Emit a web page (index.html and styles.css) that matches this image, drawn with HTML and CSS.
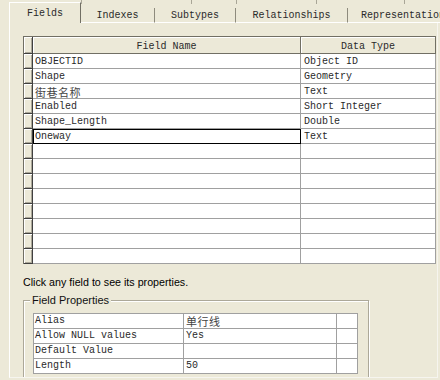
FILE: index.html
```html
<!DOCTYPE html>
<html lang="zh">

<head>
    <meta charset="UTF-8">
    <title>Field Properties</title>
    <link rel="stylesheet" href="styles.css">
</head>

<body>
    <div class="ticks">
        <span style="width: 82px"></span>
        <span style="width: 110px"></span>
        <span style="width: 45px"></span>
        <span style="width: 80px"></span>
        <span style="width: 88px"></span>
    </div>

    <div class="tabs">
        <div class="tab active">Fields</div>
        <div class="tab tab-indexes">Indexes</div>
        <div class="tab tab-subtypes">Subtypes</div>
        <div class="tab tab-relations">Relationships</div>
        <div class="tab tab-repr">Representations</div>
    </div>

    <div class="page">
        <div class="grid">
            <div class="grid-row head">
                <div class="rh"></div>
                <div class="cell name">Field Name</div>
                <div class="cell type">Data Type</div>
            </div>
            <div class="grid-row">
                <div class="rh"></div>
                <div class="cell name">OBJECTID</div>
                <div class="cell type">Object ID</div>
            </div>
            <div class="grid-row">
                <div class="rh"></div>
                <div class="cell name">Shape</div>
                <div class="cell type">Geometry</div>
            </div>
            <div class="grid-row">
                <div class="rh"></div>
                <div class="cell name"><span class="cjk">街巷名称</span></div>
                <div class="cell type">Text</div>
            </div>
            <div class="grid-row">
                <div class="rh"></div>
                <div class="cell name">Enabled</div>
                <div class="cell type">Short Integer</div>
            </div>
            <div class="grid-row">
                <div class="rh"></div>
                <div class="cell name">Shape_Length</div>
                <div class="cell type">Double</div>
            </div>
            <div class="grid-row">
                <div class="rh"></div>
                <div class="cell name focused">Oneway</div>
                <div class="cell type">Text</div>
            </div>
            <div class="grid-row"><div class="rh"></div><div class="cell name"></div><div class="cell type"></div></div>
            <div class="grid-row"><div class="rh"></div><div class="cell name"></div><div class="cell type"></div></div>
            <div class="grid-row"><div class="rh"></div><div class="cell name"></div><div class="cell type"></div></div>
            <div class="grid-row"><div class="rh"></div><div class="cell name"></div><div class="cell type"></div></div>
            <div class="grid-row"><div class="rh"></div><div class="cell name"></div><div class="cell type"></div></div>
            <div class="grid-row"><div class="rh"></div><div class="cell name"></div><div class="cell type"></div></div>
            <div class="grid-row"><div class="rh"></div><div class="cell name"></div><div class="cell type"></div></div>
            <div class="grid-row"><div class="rh"></div><div class="cell name"></div><div class="cell type"></div></div>
        </div>

        <p class="hint">Click any field to see its properties.</p>

        <fieldset class="group">
            <legend>Field Properties</legend>
            <div class="props">
                <div class="prop-row">
                    <div class="pcell key">Alias</div>
                    <div class="pcell val"><span class="cjk">单行线</span></div>
                    <div class="pcell extra"></div>
                </div>
                <div class="prop-row">
                    <div class="pcell key">Allow NULL values</div>
                    <div class="pcell val">Yes</div>
                    <div class="pcell extra"></div>
                </div>
                <div class="prop-row">
                    <div class="pcell key">Default Value</div>
                    <div class="pcell val"></div>
                    <div class="pcell extra"></div>
                </div>
                <div class="prop-row">
                    <div class="pcell key">Length</div>
                    <div class="pcell val">50</div>
                    <div class="pcell extra"></div>
                </div>
            </div>
        </fieldset>
    </div>
</body>

</html>
```

FILE: styles.css
```css
body {
    margin: 0;
    width: 440px;
    height: 380px;
    overflow: hidden;
    background-color: #ece9d8;
    font-family: "Liberation Mono", monospace;
    font-size: 10px;
    color: #2a2a2a;
}

/* second tab row, cut off at the top */
.ticks {
    display: flex;
    height: 4px;
}

.ticks span {
    flex: none;
    box-sizing: border-box;
    border-right: 1px solid #a9a697;
}

.tabs {
    display: flex;
    align-items: flex-end;
    height: 19px;
    padding-left: 9px;
    white-space: nowrap;
}

.tab {
    flex: none;
    box-sizing: border-box;
    height: 15px;
    padding-top: 1px;
    line-height: 14px;
    text-align: center;
    border-right: 1px solid #8e8b7d;
    border-bottom: 1px solid #fff;
    overflow: hidden;
}

.tab.active {
    width: 72px;
    height: 21px;
    padding-top: 0;
    line-height: 21px;
    border-left: 1px solid #fff;
    border-top: 1px solid #fff;
    border-right: 1px solid #716f64;
    border-bottom: none;
}

.tab-indexes {
    width: 74px;
}

.tab-subtypes {
    width: 81px;
}

.tab-relations {
    width: 112px;
}

.tab-repr {
    width: 117px;
}

.page {
    box-sizing: border-box;
    margin-left: 9px;
    width: 429px;
    height: 355px;
    padding: 13px 0 0 13px;
    border-left: 1px solid #fff;
    border-right: 1px solid #f6f5ef;
    border-bottom: 1px solid #f6f5ef;
    overflow: hidden;
}

.grid {
    width: 413px;
    border-top: 1px solid #716f64;
    border-left: 1px solid #716f64;
    box-sizing: border-box;
}

.grid-row {
    display: flex;
    height: 15px;
}

.grid-row.head {
    height: 17px;
}

.rh {
    flex: none;
    box-sizing: border-box;
    width: 9px;
    background-color: #ece9d8;
    border-right: 1px solid #404040;
    border-bottom: 1px solid #404040;
    box-shadow: inset 1px 1px #fff, inset -1px -1px #aca899;
}

.cell {
    flex: none;
    box-sizing: border-box;
    background-color: #fff;
    border-right: 1px solid #a0a0a0;
    border-bottom: 1px solid #a0a0a0;
    padding-top: 1px;
    line-height: 14px;
    overflow: hidden;
    white-space: nowrap;
}

.cell.name {
    width: 268px;
    padding-left: 2px;
}

.cell.type {
    width: 135px;
    padding-left: 3px;
}

.head .cell {
    background-color: #ece9d8;
    border-right: 1px solid #716f64;
    border-bottom: 1px solid #716f64;
    box-shadow: inset 1px 1px #fff;
    text-align: center;
    padding: 2px 0 0;
    line-height: 16px;
}

.cell.focused {
    outline: 1px solid #000;
    outline-offset: -1px;
}

.cjk {
    display: inline-block;
    height: 14px;
    vertical-align: top;
    font-family: "Noto Sans CJK SC", sans-serif;
    font-size: 11px;
    line-height: 14px;
    letter-spacing: 0.5px;
    color: #444;
}

.hint {
    margin: 12px 0 0;
    font-family: "Liberation Sans", Arial, sans-serif;
    font-size: 10.7px;
    line-height: 13px;
    color: #000;
}

.group {
    box-sizing: border-box;
    width: 346px;
    margin: 5px 0 0;
    padding: 6px 10px 8px 9px;
    border: 1px solid #aca899;
    box-shadow: inset 1px 1px #fff, 1px 1px #fff;
}

.group legend {
    margin-left: -3px;
    padding: 0 2px;
    background-color: #ece9d8;
    font-family: "Liberation Sans", Arial, sans-serif;
    font-size: 11px;
    line-height: 13px;
    color: #111;
}

.props {
    width: 325px;
    box-sizing: border-box;
    border-top: 1px solid #a0a0a0;
    border-left: 1px solid #a0a0a0;
}

.prop-row {
    display: flex;
    height: 15px;
}

.pcell {
    flex: none;
    box-sizing: border-box;
    background-color: #fff;
    border-right: 1px solid #a0a0a0;
    border-bottom: 1px solid #a0a0a0;
    line-height: 14px;
    overflow: hidden;
    white-space: nowrap;
}

.pcell.key {
    width: 150px;
    padding-left: 1px;
}

.pcell.val {
    width: 153px;
    padding-left: 2px;
}

.pcell.extra {
    width: 21px;
}
```
